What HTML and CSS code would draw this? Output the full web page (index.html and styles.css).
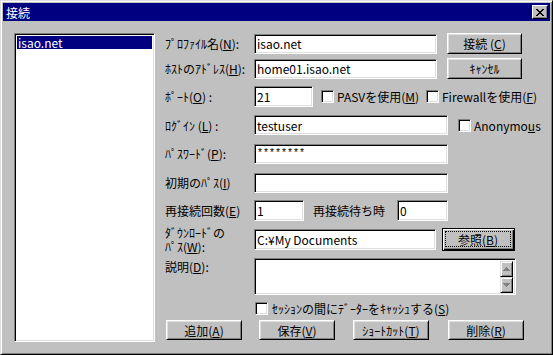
FILE: index.html
```html
<!DOCTYPE html>
<html lang="ja">
<head>
<meta charset="utf-8">
<title>接続</title>
<link rel="stylesheet" href="styles.css">
</head>
<body>
<div class="window">
  <div class="titlebar">
    <span class="title">接続</span>
    <span class="close"><svg width="8" height="7" viewBox="0 0 8 7" shape-rendering="crispEdges"><path d="M0 0h2v1h-2zM6 0h2v1h-2zM1 1h2v1h-2zM5 1h2v1h-2zM2 2h4v1h-4zM3 3h2v1h-2zM2 4h4v1h-4zM1 5h2v1h-2zM5 5h2v1h-2zM0 6h2v1h-2zM6 6h2v1h-2z" fill="#000"/></svg></span>
  </div>
  <div class="client">
    <div class="listbox">
      <div class="item selected">isao.net</div>
    </div>
    <div class="form">
      <div class="row r1">
        <span class="lbl">ﾌﾟﾛﾌｧｲﾙ名(<u>N</u>):</span>
        <div class="field w-long">isao.net</div>
        <div class="btn side">接続 (<u>C</u>)</div>
      </div>
      <div class="row r2">
        <span class="lbl">ﾎｽﾄのｱﾄﾞﾚｽ(<u>H</u>):</span>
        <div class="field w-long">home01.isao.net</div>
        <div class="btn side">ｷｬﾝｾﾙ</div>
      </div>
      <div class="row r3">
        <span class="lbl">ﾎﾟｰﾄ(<u>O</u>) :</span>
        <div class="field w-port">21</div>
        <div class="check pasv"><span class="box"></span><span class="ctext">PASVを使用(<u>M</u>)</span></div>
        <div class="check fw"><span class="box"></span><span class="ctext">Firewallを使用(<u>F</u>)</span></div>
      </div>
      <div class="row r4">
        <span class="lbl">ﾛｸﾞｲﾝ (<u>L</u>) :</span>
        <div class="field w-mid">testuser</div>
        <div class="check anon"><span class="box"></span><span class="ctext">Anonymo<u>u</u>s</span></div>
      </div>
      <div class="row r5">
        <span class="lbl">ﾊﾟｽﾜｰﾄﾞ(<u>P</u>):</span>
        <div class="field w-mid pw">********</div>
      </div>
      <div class="row r6">
        <span class="lbl">初期のﾊﾟｽ(<u>I</u>)</span>
        <div class="field w-mid"></div>
      </div>
      <div class="row r7">
        <span class="lbl">再接続回数(<u>E</u>)</span>
        <div class="field w-num">1</div>
        <span class="lbl2">再接続待ち時</span>
        <div class="field w-num2">0</div>
      </div>
      <div class="row r8">
        <span class="lbl two"><span class="ln">ﾀﾞｳﾝﾛｰﾄﾞの</span><span class="ln">ﾊﾟｽ(<u>W</u>):</span></span>
        <div class="field w-dl">C:¥My Documents</div>
        <div class="btn default"><span class="focus">参照(<u>B</u>)</span></div>
      </div>
      <div class="row r9">
        <span class="lbl top">説明(<u>D</u>):</span>
        <div class="field area">
          <div class="scroll">
            <div class="arrow"><svg width="7" height="4" viewBox="0 0 7 4" shape-rendering="crispEdges"><path d="M3 0h1v1h-1zM2 1h3v1h-3zM1 2h5v1h-5zM0 3h7v1h-7z" fill="#808080"/></svg></div>
            <div class="track"></div>
            <div class="arrow"><svg width="7" height="4" viewBox="0 0 7 4" shape-rendering="crispEdges"><path d="M0 0h7v1h-7zM1 1h5v1h-5zM2 2h3v1h-3zM3 3h1v1h-1z" fill="#808080"/></svg></div>
          </div>
        </div>
      </div>
      <div class="row r10">
        <div class="check cache"><span class="box"></span><span class="ctext">ｾｯｼｮﾝの間にﾃﾞｰﾀｰをｷｬｯｼｭする(<u>S</u>)</span></div>
      </div>
      <div class="row r11">
        <div class="btn bottom">追加(<u>A</u>)</div>
        <div class="btn bottom">保存(<u>V</u>)</div>
        <div class="btn bottom">ｼｮｰﾄｶｯﾄ(<u>T</u>)</div>
        <div class="btn bottom">削除(<u>R</u>)</div>
      </div>
    </div>
  </div>
</div>
</body>
</html>
```

FILE: styles.css
```css
html, body {
  margin: 0;
  padding: 0;
  background: #c0c0c0;
}

body {
  font-family: "Noto Sans CJK JP", "Noto Sans", sans-serif;
  font-size: 12px;
  line-height: 13px;
  color: #000;
}

.window {
  width: 553px;
  height: 355px;
  box-sizing: border-box;
  border: 1px solid;
  border-color: #dfdfdf #000 #000 #dfdfdf;
  box-shadow: inset 1px 1px #fff, inset -1px -1px #808080;
  padding: 2px;
  background: #c0c0c0;
  display: flex;
  flex-direction: column;
}

.titlebar {
  height: 18px;
  flex: none;
  background: #000080;
  display: flex;
  align-items: center;
  justify-content: space-between;
  padding-left: 3px;
  padding-right: 2px;
}

.title {
  color: #fff;
  font-size: 12px;
}

.close {
  width: 16px;
  height: 14px;
  box-sizing: border-box;
  background: #c0c0c0;
  border: 1px solid;
  border-color: #fff #000 #000 #fff;
  box-shadow: inset -1px -1px #808080;
  display: flex;
  align-items: center;
  justify-content: center;
}

.client {
  flex: 1;
  display: flex;
  padding: 12px 0 0 11px;
}

.listbox {
  width: 141px;
  height: 309px;
  flex: none;
  box-sizing: border-box;
  background: #fff;
  border: 1px solid;
  border-color: #808080 #fff #fff #808080;
  box-shadow: inset 1px 1px #000, inset -1px -1px #dfdfdf;
  padding: 2px 2px 0 2px;
}

.item {
  height: 13px;
  padding-left: 1px;
}

.item.selected {
  background: #000080;
  color: #fff;
}

.form {
  margin-left: 10px;
  display: flex;
  flex-direction: column;
  width: 385px;
}

.row {
  display: flex;
  align-items: center;
  flex: none;
}

.r1 { height: 21px; }
.r2 { height: 21px; margin-top: 4px; }
.r3 { height: 21px; margin-top: 7px; }
.r4 { height: 20px; margin-top: 8px; }
.r5 { height: 21px; margin-top: 8px; }
.r6 { height: 21px; margin-top: 8px; }
.r7 { height: 21px; margin-top: 7px; }
.r8 { height: 23px; margin-top: 7px; }
.r9 { height: 37px; margin-top: 7px; align-items: flex-start; }
.r10 { height: 14px; margin-top: 6px; }
.r11 { height: 20px; margin-top: 5px; }

.lbl {
  width: 89px;
  flex: none;
  white-space: nowrap;
}

.lbl.two {
  display: flex;
  flex-direction: column;
  line-height: 14px;
  align-self: center;
}

.lbl.top {
  padding-top: 2px;
}

.lbl2 {
  margin-left: 9px;
  width: 84px;
  flex: none;
  white-space: nowrap;
}

.field {
  height: 20px;
  box-sizing: border-box;
  flex: none;
  background: #fff;
  border: 1px solid;
  border-color: #808080 #fff #fff #808080;
  box-shadow: inset 1px 1px #000, inset -1px -1px #dfdfdf;
  padding: 0 0 0 2px;
  display: flex;
  align-items: center;
  white-space: nowrap;
  overflow: hidden;
}

.w-long { width: 183px; }
.w-mid { width: 194px; }
.w-port { width: 59px; height: 21px; }
.w-num { width: 50px; height: 21px; }
.w-num2 { width: 51px; height: 21px; }
.w-dl { width: 182px; height: 21px; }

.pw {
  font-family: "Liberation Mono", monospace;
  font-size: 10px;
  letter-spacing: 0;
}

.field.area {
  width: 262px;
  height: 37px;
  padding: 2px;
  justify-content: flex-end;
  align-items: stretch;
}

.scroll {
  width: 13px;
  display: flex;
  flex-direction: column;
}

.arrow {
  height: 16px;
  flex: none;
  box-sizing: border-box;
  background: #c0c0c0;
  border: 1px solid;
  border-color: #dfdfdf #000 #000 #dfdfdf;
  box-shadow: inset 1px 1px #fff, inset -1px -1px #808080;
  display: flex;
  align-items: center;
  justify-content: center;
}

.track {
  flex: 1;
  background: repeating-linear-gradient(90deg, #fff 0 1px, #c0c0c0 1px 2px);
}

.btn {
  height: 21px;
  box-sizing: border-box;
  flex: none;
  background: #c0c0c0;
  border: 1px solid;
  border-color: #fff #000 #000 #fff;
  box-shadow: inset 1px 1px #dfdfdf, inset -1px -1px #808080;
  display: flex;
  align-items: center;
  justify-content: center;
  white-space: nowrap;
}

.btn.side {
  width: 75px;
  margin-left: 10px;
}

.btn.default {
  width: 73px;
  height: 23px;
  margin-left: 6px;
  border: 1px solid #000;
  box-shadow: inset 1px 1px #fff, inset -1px -1px #000, inset -2px -2px #808080;
  padding: 3px 4px 4px 3px;
  align-items: stretch;
}

.focus {
  flex: 1;
  outline: 1px dotted #000;
  display: flex;
  align-items: center;
  justify-content: center;
}

.btn.bottom {
  width: 76px;
  height: 20px;
}

.r11 .btn:nth-child(1) { margin-left: 1px; }
.r11 .btn:nth-child(2) { margin-left: 17px; }
.r11 .btn:nth-child(3) { margin-left: 18px; }
.r11 .btn:nth-child(4) { margin-left: 19px; }

.check {
  display: flex;
  align-items: center;
  flex: none;
  white-space: nowrap;
}

.box {
  width: 13px;
  height: 13px;
  box-sizing: border-box;
  flex: none;
  background: #fff;
  border: 1px solid;
  border-color: #808080 #fff #fff #808080;
  box-shadow: inset 1px 1px #000, inset -1px -1px #dfdfdf;
}

.ctext {
  margin-left: 3px;
}

.check.pasv {
  margin-left: 8px;
  width: 105px;
}

.check.anon {
  margin-left: 10px;
}

.check.cache {
  margin-left: 90px;
}

.check.cache .ctext {
  margin-left: 4px;
}
```
